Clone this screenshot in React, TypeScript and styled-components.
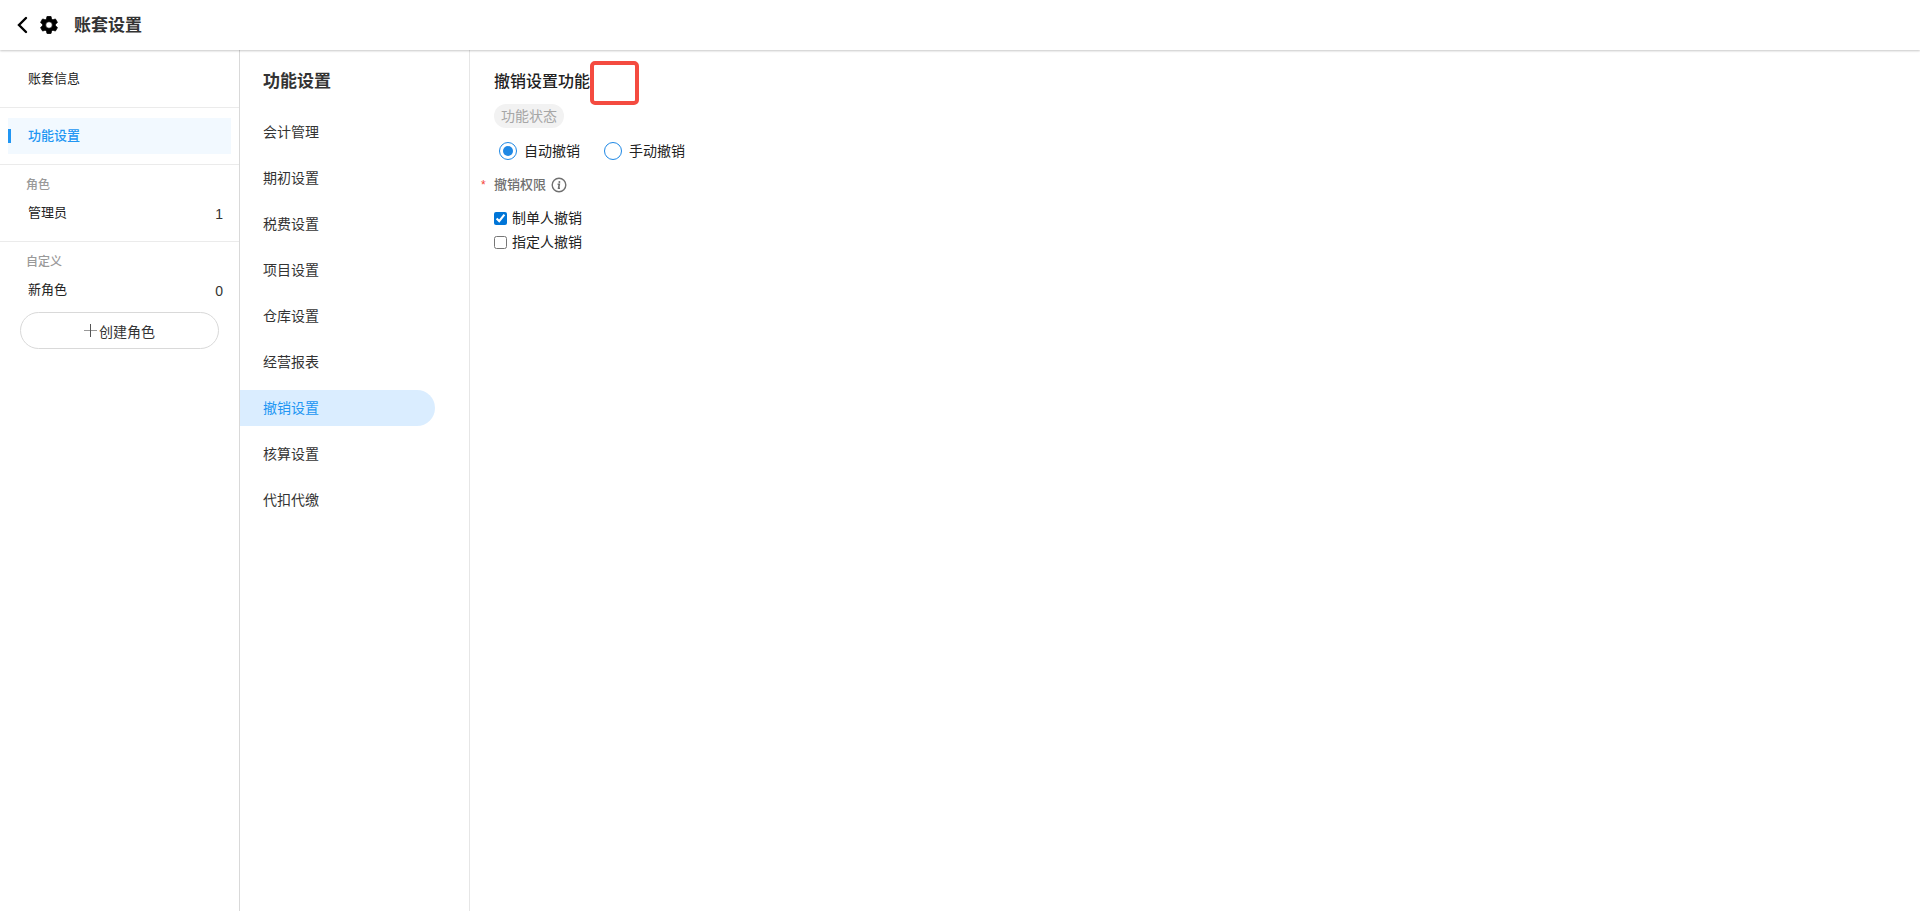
import React, { useState } from "react";
import styled, { createGlobalStyle, css } from "styled-components";

const GlobalStyle = createGlobalStyle`
  *, *::before, *::after { box-sizing: border-box; }
  body {
    margin: 0;
    background: #fff;
    color: #222;
    font-family: "Liberation Sans", "Noto Sans CJK SC", sans-serif;
    font-size: 14px;
    line-height: 20px;
  }
  h1, h2, p, ul, fieldset { margin: 0; padding: 0; border: 0; }
  ul { list-style: none; }
  a { color: inherit; text-decoration: none; }
  button { font-family: inherit; cursor: pointer; }
`;

const Page = styled.div`
  display: flex;
  flex-direction: column;
  min-height: 100vh;
`;

const Header = styled.header`
  display: flex;
  align-items: center;
  height: 50px;
  padding: 0 16px;
  box-shadow: 0 1px 2px rgba(0, 0, 0, 0.22);
  z-index: 1;
`;

const BackButton = styled.button`
  display: flex;
  padding: 0;
  border: 0;
  background: none;
  color: #000;
`;

const GearIcon = styled.svg`
  margin: 0 16px 0 12px;
`;

const HeaderTitle = styled.h1`
  padding-top: 2px;
  font-size: 17px;
  line-height: 24px;
  font-weight: 700;
  color: #333;
`;

const Body = styled.div`
  display: flex;
  flex: 1;
`;

const Sidebar = styled.nav`
  flex: 0 0 240px;
  padding-top: 1px;
  border-right: 1px solid #d9d9d9;
`;

const SideSection = styled.section`
  padding: 10px 8px;
  & + & { border-top: 1px solid #ebebeb; }
`;

const SideLink = styled.a<{ $active?: boolean }>`
  display: flex;
  align-items: center;
  justify-content: space-between;
  height: 36px;
  padding: 0 8px 0 20px;
  font-size: 13px;
  ${(p) =>
    p.$active &&
    css`
      position: relative;
      background: #f2f9ff;
      color: #2196f3;
      font-weight: 500;
      &::before {
        content: "";
        position: absolute;
        left: 0;
        width: 3px;
        height: 14px;
        background: #2196f3;
      }
    `}
`;

const Count = styled.span`
  padding-top: 2px;
  font-size: 14px;
  color: #333;
`;

const SideLabel = styled.p`
  padding-left: 18px;
  font-size: 12px;
  font-weight: 500;
  color: #999;
`;

const CreateButton = styled.button`
  display: flex;
  align-items: center;
  justify-content: center;
  gap: 2px;
  width: calc(100% - 24px);
  height: 37px;
  margin: 4px 12px 0;
  border: 1px solid #d9d9d9;
  border-radius: 19px;
  background: #fff;
  color: #333;
  font-size: 14px;
`;

const FeatureNav = styled.nav`
  flex: 0 0 230px;
  padding-top: 20px;
  border-right: 1px solid #e6e6e6;
`;

const FeatureTitle = styled.h2`
  padding-left: 23px;
  font-size: 17px;
  line-height: 24px;
  font-weight: 700;
  color: #333;
`;

const FeatureList = styled.ul`
  display: flex;
  flex-direction: column;
  gap: 10px;
  padding: 20px 34px 0 0;
`;

const FeatureLink = styled.a<{ $active?: boolean }>`
  display: flex;
  align-items: center;
  height: 36px;
  padding-left: 23px;
  border-radius: 0 18px 18px 0;
  color: ${(p) => (p.$active ? "#2196f3" : "#333")};
  background: ${(p) => (p.$active ? "#daedff" : "transparent")};
`;

const Content = styled.main`
  flex: 1;
  min-width: 0;
  padding: 20px 24px;
`;

const ContentHead = styled.div`
  position: relative;
  width: max-content;
`;

const ContentTitle = styled.h2`
  font-size: 16px;
  line-height: 24px;
  font-weight: 500;
  color: #222;
`;

const Marker = styled.span`
  position: absolute;
  left: 100%;
  top: -9px;
  width: 49px;
  height: 44px;
  border: 4px solid #f44b40;
  border-radius: 5px;
`;

const StatusTag = styled.span`
  display: block;
  width: max-content;
  margin-top: 10px;
  padding: 0 7px;
  border-radius: 12px;
  background: #f2f2f2;
  color: #a6a6a6;
  line-height: 24px;
`;

const RadioGroup = styled.fieldset`
  display: flex;
  gap: 24px;
  padding: 13px 5px 0;
`;

const RadioLabel = styled.label`
  display: flex;
  align-items: center;
  gap: 7px;
`;

const Radio = styled.input`
  appearance: none;
  width: 18px;
  height: 18px;
  margin: 0;
  padding: 3px;
  border: 1px solid #1e88e5;
  border-radius: 50%;
  background-clip: content-box;
  &:checked { background-color: #1e88e5; }
`;

const PermissionGroup = styled.fieldset`
  padding-top: 11px;
`;

const PermissionTitle = styled.legend`
  display: flex;
  align-items: center;
  margin-left: -13px;
  padding: 14px 0 0;
  font-size: 13px;
  font-weight: 500;
  color: #707070;
`;

const Required = styled.span`
  width: 13px;
  color: #f44336;
  font-size: 12px;
  font-weight: 400;
`;

const InfoIcon = styled.svg`
  margin-left: 5px;
`;

const CheckLabel = styled.label`
  display: flex;
  align-items: center;
  gap: 5px;
  width: max-content;
  height: 24px;
`;

const Checkbox = styled.input`
  width: 13px;
  height: 13px;
  margin: 0;
  accent-color: #0075d7;
`;

const features = [
  "会计管理",
  "期初设置",
  "税费设置",
  "项目设置",
  "仓库设置",
  "经营报表",
  "撤销设置",
  "核算设置",
  "代扣代缴",
];

export default function App() {
  const [mode, setMode] = useState("auto");
  const [active, setActive] = useState("撤销设置");

  return (
    <Page>
      <GlobalStyle />
      <Header>
        <BackButton type="button" aria-label="返回">
          <svg
            width="12"
            height="18"
            viewBox="0 0 12 18"
            fill="none"
            stroke="currentColor"
            strokeWidth="2.4"
            strokeLinecap="round"
          >
            <path d="M10 2 3 9l7 7" />
          </svg>
        </BackButton>
        <GearIcon width="18" height="18" viewBox="2 2 20 20" aria-hidden="true">
          <path
            fill="#000"
            stroke="#000"
            strokeWidth="0.8"
            strokeLinejoin="round"
            d="M19.14 12.94c.04-.3.06-.61.06-.94s-.02-.64-.07-.94l2.03-1.58a.49.49 0 0 0 .12-.61l-1.92-3.32a.49.49 0 0 0-.59-.22l-2.39.96a7 7 0 0 0-1.62-.94l-.36-2.54a.48.48 0 0 0-.48-.41h-3.84a.48.48 0 0 0-.47.41l-.36 2.54a7.3 7.3 0 0 0-1.62.94l-2.39-.96a.48.48 0 0 0-.59.22L2.74 8.87a.48.48 0 0 0 .12.61l2.03 1.58a6 6 0 0 0 0 1.88l-2.03 1.58a.49.49 0 0 0-.12.61l1.92 3.32c.12.22.37.29.59.22l2.39-.96a7 7 0 0 0 1.62.94l.36 2.54c.05.24.24.41.48.41h3.84c.24 0 .44-.17.47-.41l.36-2.54a7.3 7.3 0 0 0 1.62-.94l2.39.96c.22.08.47 0 .59-.22l1.92-3.32a.48.48 0 0 0-.12-.61zM12 15.7a3.7 3.7 0 1 1 0-7.4 3.7 3.7 0 0 1 0 7.4z"
          />
        </GearIcon>
        <HeaderTitle>账套设置</HeaderTitle>
      </Header>
      <Body>
        <Sidebar>
          <SideSection>
            <SideLink href="#info">账套信息</SideLink>
          </SideSection>
          <SideSection>
            <SideLink href="#features" $active>功能设置</SideLink>
          </SideSection>
          <SideSection>
            <SideLabel>角色</SideLabel>
            <SideLink href="#admin">
              管理员<Count>1</Count>
            </SideLink>
          </SideSection>
          <SideSection>
            <SideLabel>自定义</SideLabel>
            <SideLink href="#new-role">
              新角色<Count>0</Count>
            </SideLink>
            <CreateButton type="button">
              <svg width="13" height="13" viewBox="0 0 13 13" fill="none" aria-hidden="true">
                <path d="M0 6.5h13" stroke="#999" />
                <path d="M6.5 0v13" stroke="#555" />
              </svg>
              创建角色
            </CreateButton>
          </SideSection>
        </Sidebar>
        <FeatureNav>
          <FeatureTitle>功能设置</FeatureTitle>
          <FeatureList>
            {features.map((name) => (
              <li key={name}>
                <FeatureLink href="#feature" $active={name === active} onClick={() => setActive(name)}>
                  {name}
                </FeatureLink>
              </li>
            ))}
          </FeatureList>
        </FeatureNav>
        <Content>
          <ContentHead>
            <ContentTitle>撤销设置功能</ContentTitle>
            <Marker />
          </ContentHead>
          <StatusTag>功能状态</StatusTag>
          <RadioGroup>
            <RadioLabel>
              <Radio type="radio" name="mode" checked={mode === "auto"} onChange={() => setMode("auto")} />
              自动撤销
            </RadioLabel>
            <RadioLabel>
              <Radio type="radio" name="mode" checked={mode === "manual"} onChange={() => setMode("manual")} />
              手动撤销
            </RadioLabel>
          </RadioGroup>
          <PermissionGroup>
            <PermissionTitle>
              <Required>*</Required>
              撤销权限
              <InfoIcon width="16" height="16" viewBox="0 0 16 16" fill="none" aria-hidden="true">
                <circle cx="8" cy="8" r="6.8" stroke="#707070" strokeWidth="1.4" />
                <circle cx="8.4" cy="4.9" r="1" fill="#707070" />
                <path d="M6.6 7.2h1.7L7.6 11.2H9" stroke="#707070" strokeWidth="1.6" />
              </InfoIcon>
            </PermissionTitle>
            <CheckLabel>
              <Checkbox type="checkbox" defaultChecked />
              制单人撤销
            </CheckLabel>
            <CheckLabel>
              <Checkbox type="checkbox" />
              指定人撤销
            </CheckLabel>
          </PermissionGroup>
        </Content>
      </Body>
    </Page>
  );
}
